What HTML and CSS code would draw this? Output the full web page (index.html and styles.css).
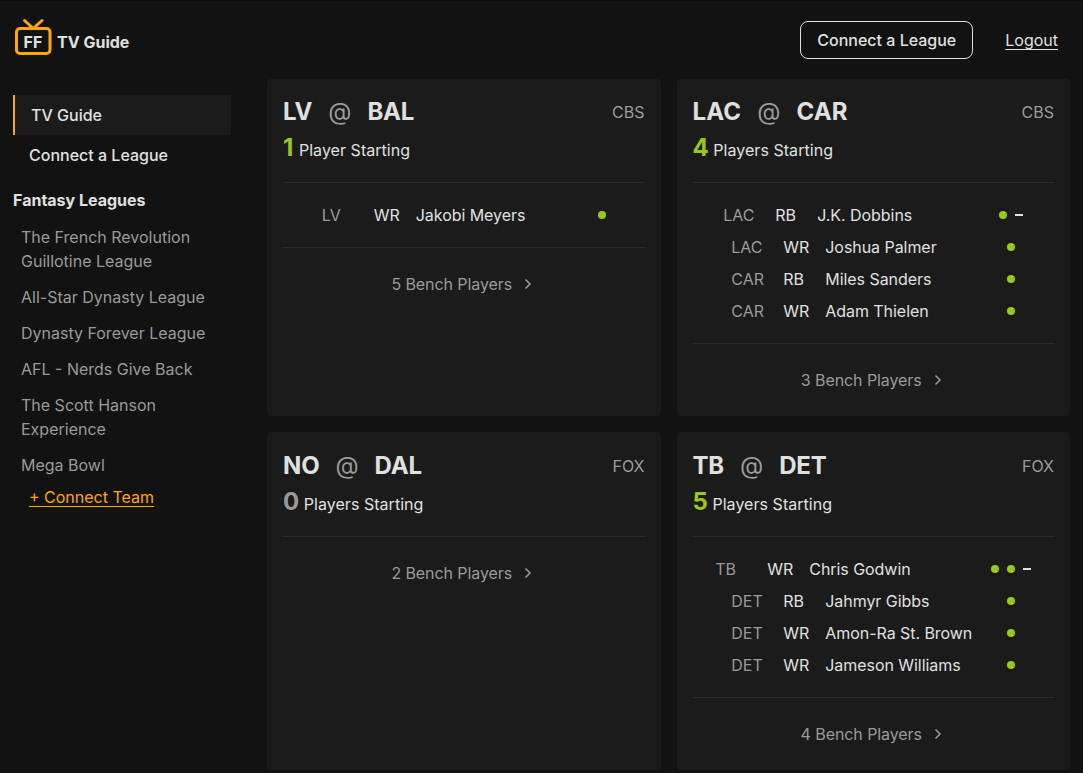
FILE: index.html
```html
<!DOCTYPE html>
<html lang="en">
<head>
<meta charset="utf-8">
<title>FF TV Guide</title>
<link rel="stylesheet" href="styles.css">
</head>
<body>
<header class="topbar">
  <a class="brand">
    <span class="logo">
      <svg class="logo-frame" width="38" height="38" viewBox="0 0 38 38" fill="none" stroke="#ffa50f" stroke-width="3" stroke-linecap="round" stroke-linejoin="round"><path d="M10.5 2.5 19.2 10.5 28 2.5"/><rect x="2.5" y="10.5" width="33.5" height="25" rx="3.5"/></svg>
      <span class="logo-text">FF</span>
    </span>
    <span>TV Guide</span>
  </a>
  <nav class="actions">
    <a class="button">Connect a League</a>
    <a class="logout">Logout</a>
  </nav>
</header>
<div class="layout">
  <aside class="sidebar">
    <a class="nav active">TV Guide</a>
    <a class="nav">Connect a League</a>
    <h2 class="side-title">Fantasy Leagues</h2>
    <ul class="leagues">
      <li>The French Revolution Guillotine League</li>
      <li>All-Star Dynasty League</li>
      <li>Dynasty Forever League</li>
      <li>AFL - Nerds Give Back</li>
      <li>The Scott Hanson Experience</li>
      <li>Mega Bowl</li>
    </ul>
    <a class="connect">+ Connect Team</a>
  </aside>
  <main class="games">
    <section class="card">
      <div class="head"><h3 class="match">LV <span class="at">@</span> BAL</h3><span class="network">CBS</span></div>
      <p class="starting"><b class="count single">1</b> Player Starting</p>
      <ul class="players">
        <li class="player"><span class="team">LV</span><span class="pos">WR</span><span class="name">Jakobi Meyers</span><span class="marks"><i class="dot"></i></span></li>
      </ul>
      <div class="bench">5 Bench Players <svg class="chevron" width="8" height="12" viewBox="0 0 8 12"><path d="M1.5 1.5 6 6 1.5 10.5"/></svg></div>
    </section>
    <section class="card">
      <div class="head"><h3 class="match wide">LAC <span class="at">@</span> CAR</h3><span class="network">CBS</span></div>
      <p class="starting"><b class="count">4</b> Players Starting</p>
      <ul class="players">
        <li class="player"><span class="team">LAC</span><span class="pos">RB</span><span class="name">J.K. Dobbins</span><span class="marks"><i class="dot"></i><i class="dash"></i></span></li>
        <li class="player"><span class="team">LAC</span><span class="pos">WR</span><span class="name">Joshua Palmer</span><span class="marks"><i class="dot"></i></span></li>
        <li class="player"><span class="team">CAR</span><span class="pos">RB</span><span class="name">Miles Sanders</span><span class="marks"><i class="dot"></i></span></li>
        <li class="player"><span class="team">CAR</span><span class="pos">WR</span><span class="name">Adam Thielen</span><span class="marks"><i class="dot"></i></span></li>
      </ul>
      <div class="bench">3 Bench Players <svg class="chevron" width="8" height="12" viewBox="0 0 8 12"><path d="M1.5 1.5 6 6 1.5 10.5"/></svg></div>
    </section>
    <section class="card lower">
      <div class="head"><h3 class="match">NO <span class="at">@</span> DAL</h3><span class="network">FOX</span></div>
      <p class="starting"><b class="count none">0</b> Players Starting</p>
      <div class="bench">2 Bench Players <svg class="chevron" width="8" height="12" viewBox="0 0 8 12"><path d="M1.5 1.5 6 6 1.5 10.5"/></svg></div>
    </section>
    <section class="card lower">
      <div class="head"><h3 class="match">TB <span class="at">@</span> DET</h3><span class="network">FOX</span></div>
      <p class="starting"><b class="count">5</b> Players Starting</p>
      <ul class="players">
        <li class="player"><span class="team">TB</span><span class="pos">WR</span><span class="name">Chris Godwin</span><span class="marks"><i class="dot"></i><i class="dot"></i><i class="dash"></i></span></li>
        <li class="player"><span class="team">DET</span><span class="pos">RB</span><span class="name">Jahmyr Gibbs</span><span class="marks"><i class="dot"></i></span></li>
        <li class="player"><span class="team">DET</span><span class="pos">WR</span><span class="name">Amon-Ra St. Brown</span><span class="marks"><i class="dot"></i></span></li>
        <li class="player"><span class="team">DET</span><span class="pos">WR</span><span class="name">Jameson Williams</span><span class="marks"><i class="dot"></i></span></li>
      </ul>
      <div class="bench">4 Bench Players <svg class="chevron" width="8" height="12" viewBox="0 0 8 12"><path d="M1.5 1.5 6 6 1.5 10.5"/></svg></div>
    </section>
  </main>
</div>
</body>
</html>
```

FILE: styles.css
```css
* { box-sizing: border-box; }
html { background: #121212; }
body { margin: 0; height: 773px; overflow: hidden; padding: 0 13px; border-top: 1px solid #0b0b0b; font: 16px/24px Inter, sans-serif; color: #e0e0e0; }
h2, h3, p, ul { margin: 0; padding: 0; list-style: none; }

.topbar { display: flex; justify-content: space-between; height: 78px; padding-top: 17px; }
.brand { display: flex; align-items: flex-start; gap: 5px; font-weight: 700; line-height: 48px; }
.logo { display: grid; width: 39px; height: 38px; justify-items: center; }
.logo-frame, .logo-text { grid-area: 1 / 1; }
.logo-text { padding-left: 1px; }
.actions { display: flex; align-items: flex-start; gap: 32px; padding: 3px 12px 0 0; }
.button { height: 38px; padding: 0 16px; border: 1px solid #e0e0e0; border-radius: 8px; font-weight: 500; line-height: 36px; }
.logout { line-height: 38px; text-decoration: underline; text-underline-offset: 3px; }

.layout { display: grid; grid-template-columns: 218px 803px; column-gap: 36px; }
.sidebar { padding-top: 16px; }
.nav { display: block; height: 40px; padding-left: 16px; font-weight: 500; line-height: 40px; }
.nav.active { border-left: 2px solid #ffa50f; background: #1b1b1b; }
.side-title { margin-top: 13px; font-size: 16px; font-weight: 700; line-height: 24px; }
.leagues { display: grid; gap: 12px; padding: 13px 8px 0; color: #9a9a9a; }
.connect { display: inline-block; margin: 8px 0 0 16px; color: #ffa50f; text-decoration: underline; text-underline-offset: 3px; }

.games { display: grid; grid-template-columns: 1fr 1fr; grid-template-rows: 337px 338px; gap: 16px; }
.card { padding: 16px; border-radius: 4px; background: #1b1b1b; }
.card.lower { padding-top: 17px; }
.head { display: flex; justify-content: space-between; height: 34px; line-height: 34px; }
.match { display: flex; gap: 16px; font-size: 24px; font-weight: 700; line-height: 34px; letter-spacing: -0.15px; }
.match.wide { letter-spacing: 0.15px; }
.at { color: #9a9a9a; font-weight: 400; }
.network { color: #9a9a9a; }
.starting { height: 53px; padding-top: 1px; line-height: 36px; letter-spacing: 0.04px; }
.count { color: #96c81e; font-size: 24px; font-weight: 700; }
.count.single { margin-right: 1px; }
.count.none { color: #9a9a9a; }
.players { padding: 16px 0; border-top: 1px solid #2c2c2c; }
.player { display: flex; justify-content: center; height: 32px; line-height: 32px; }
.team { width: 52px; color: #9a9a9a; }
.pos { width: 42px; }
.name { width: 182px; letter-spacing: -0.05px; }
.marks { display: flex; align-items: center; gap: 8px; }
.dot { width: 8px; height: 8px; border-radius: 50%; background: #96c81e; }
.dash { width: 8px; height: 2px; background: #e0e0e0; }
.bench { display: flex; justify-content: center; align-items: center; gap: 12px; height: 73px; padding-right: 4px; border-top: 1px solid #2c2c2c; color: #9a9a9a; letter-spacing: -0.08px; }
.chevron { fill: none; stroke: #9a9a9a; stroke-width: 1.5; }
```
